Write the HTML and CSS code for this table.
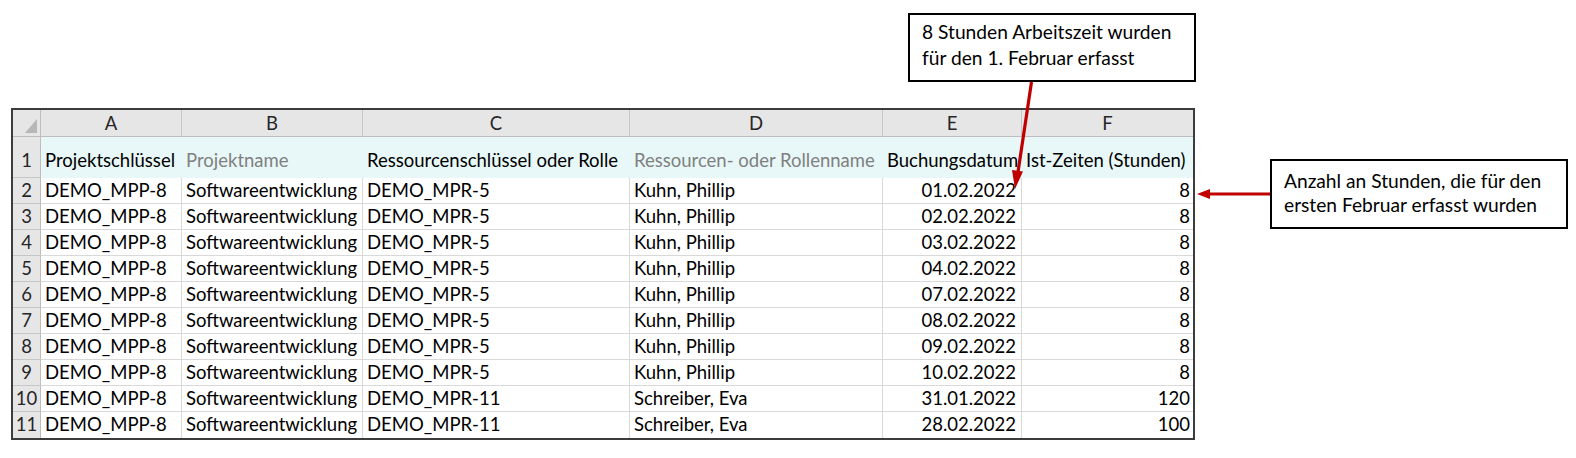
FILE: index.html
```html
<!DOCTYPE html>
<html lang="de">
<head>
<meta charset="utf-8">
<title>Ist-Zeiten</title>
<link rel="stylesheet" href="styles.css">
</head>
<body>
<div class="page">
  <div class="sheet">
    <div class="corner"><span class="tri"></span></div>
    <div class="ch">A</div><div class="ch">B</div><div class="ch">C</div><div class="ch">D</div><div class="ch">E</div><div class="ch last">F</div>

    <div class="rh rh1">1</div>
    <div class="hd">Projektschlüssel</div>
    <div class="hd muted">Projektname</div>
    <div class="hd">Ressourcenschlüssel oder Rolle</div>
    <div class="hd muted">Ressourcen- oder Rollenname</div>
    <div class="hd">Buchungsdatum</div>
    <div class="hd">Ist-Zeiten (Stunden)</div>

    <div class="rh">2</div><div class="c">DEMO_MPP-8</div><div class="c">Softwareentwicklung</div><div class="c">DEMO_MPR-5</div><div class="c">Kuhn, Phillip</div><div class="c num">01.02.2022</div><div class="c num last">8</div>
    <div class="rh">3</div><div class="c">DEMO_MPP-8</div><div class="c">Softwareentwicklung</div><div class="c">DEMO_MPR-5</div><div class="c">Kuhn, Phillip</div><div class="c num">02.02.2022</div><div class="c num last">8</div>
    <div class="rh">4</div><div class="c">DEMO_MPP-8</div><div class="c">Softwareentwicklung</div><div class="c">DEMO_MPR-5</div><div class="c">Kuhn, Phillip</div><div class="c num">03.02.2022</div><div class="c num last">8</div>
    <div class="rh">5</div><div class="c">DEMO_MPP-8</div><div class="c">Softwareentwicklung</div><div class="c">DEMO_MPR-5</div><div class="c">Kuhn, Phillip</div><div class="c num">04.02.2022</div><div class="c num last">8</div>
    <div class="rh">6</div><div class="c">DEMO_MPP-8</div><div class="c">Softwareentwicklung</div><div class="c">DEMO_MPR-5</div><div class="c">Kuhn, Phillip</div><div class="c num">07.02.2022</div><div class="c num last">8</div>
    <div class="rh">7</div><div class="c">DEMO_MPP-8</div><div class="c">Softwareentwicklung</div><div class="c">DEMO_MPR-5</div><div class="c">Kuhn, Phillip</div><div class="c num">08.02.2022</div><div class="c num last">8</div>
    <div class="rh">8</div><div class="c">DEMO_MPP-8</div><div class="c">Softwareentwicklung</div><div class="c">DEMO_MPR-5</div><div class="c">Kuhn, Phillip</div><div class="c num">09.02.2022</div><div class="c num last">8</div>
    <div class="rh">9</div><div class="c">DEMO_MPP-8</div><div class="c">Softwareentwicklung</div><div class="c">DEMO_MPR-5</div><div class="c">Kuhn, Phillip</div><div class="c num">10.02.2022</div><div class="c num last">8</div>
    <div class="rh">10</div><div class="c">DEMO_MPP-8</div><div class="c">Softwareentwicklung</div><div class="c">DEMO_MPR-11</div><div class="c">Schreiber, Eva</div><div class="c num">31.01.2022</div><div class="c num last">120</div>
    <div class="rh bottom">11</div><div class="c bottom">DEMO_MPP-8</div><div class="c bottom">Softwareentwicklung</div><div class="c bottom">DEMO_MPR-11</div><div class="c bottom">Schreiber, Eva</div><div class="c num bottom">28.02.2022</div><div class="c num last bottom">100</div>
  </div>

  <div class="callout callout-top">8 Stunden Arbeitszeit wurden<br>für den 1. Februar erfasst</div>
  <div class="callout callout-right">Anzahl an Stunden, die für den<br>ersten Februar erfasst wurden</div>

  <svg class="arrows" width="1576" height="458" viewBox="0 0 1576 458">
    <line x1="1031.5" y1="82" x2="1018" y2="172" stroke="#C00000" stroke-width="3.2"/>
    <polygon points="1015,189 1012,170 1023,171.5" fill="#C00000"/>
    <line x1="1270" y1="194" x2="1207" y2="194" stroke="#C00000" stroke-width="3.2"/>
    <polygon points="1197,194 1210,189 1210,199" fill="#C00000"/>
  </svg>
</div>
</body>
</html>
```

FILE: styles.css
```css
html, body {
  margin: 0;
  padding: 0;
  background: #ffffff;
}

.page {
  position: relative;
  width: 1576px;
  height: 458px;
  box-sizing: border-box;
  padding: 108px 0 0 11px;
  font-family: Lato, "Noto Sans", sans-serif;
  font-size: 18.5px;
  color: #000000;
  overflow: hidden;
}

.sheet {
  display: grid;
  grid-template-columns: 28px 141px 181px 267px 253px 139px 171px;
  grid-template-rows: 27px 41px repeat(10, 26px);
  width: max-content;
  border: 2px solid #3c3c3c;
  background: #ffffff;
}

.sheet > div {
  box-sizing: border-box;
  white-space: nowrap;
}

.corner {
  position: relative;
  background: #e6e6e6;
  border-right: 1px solid #bdbdbd;
  border-bottom: 1px solid #bdbdbd;
}

.tri {
  position: absolute;
  right: 3px;
  bottom: 3px;
  width: 0;
  height: 0;
  border-left: 12px solid transparent;
  border-bottom: 14px solid #b7b7b7;
}

.ch {
  background: #e6e6e6;
  border-right: 1px solid #c6c6c6;
  border-bottom: 1px solid #bdbdbd;
  text-align: center;
  padding-top: 1px;
  line-height: 25px;
  color: #262626;
}

.ch.last {
  border-right: none;
}

.rh {
  background: #e6e6e6;
  border-right: 1px solid #bdbdbd;
  border-bottom: 1px solid #c6c6c6;
  text-align: center;
  line-height: 25px;
  color: #262626;
}

.rh1 {
  padding-top: 11px;
}

.rh.bottom {
  border-bottom: none;
}

.hd {
  background: #e8f8f8;
  padding: 11px 3px 0 4px;
  line-height: 25px;
}

.muted {
  color: #808080;
}

.c {
  border-right: 1px solid #d9d9d9;
  border-bottom: 1px solid #d9d9d9;
  padding: 0 4px 0 4px;
  line-height: 25px;
}

.c.num {
  text-align: right;
  padding-right: 5px;
}

.c.last {
  border-right: none;
  padding-right: 3px;
}

.c.bottom {
  border-bottom: none;
}

.callout {
  position: absolute;
  box-sizing: border-box;
  border: 2px solid #000000;
  background: #ffffff;
  color: #000000;
  white-space: nowrap;
  font-size: 19.2px;
}

.callout-top {
  left: 908px;
  top: 13px;
  width: 288px;
  height: 69px;
  padding: 4px 0 0 12px;
  line-height: 26px;
}

.callout-right {
  left: 1270px;
  top: 159px;
  width: 298px;
  height: 70px;
  padding: 8px 0 0 12px;
  line-height: 24px;
}

.arrows {
  position: absolute;
  left: 0;
  top: 0;
  pointer-events: none;
}
```
